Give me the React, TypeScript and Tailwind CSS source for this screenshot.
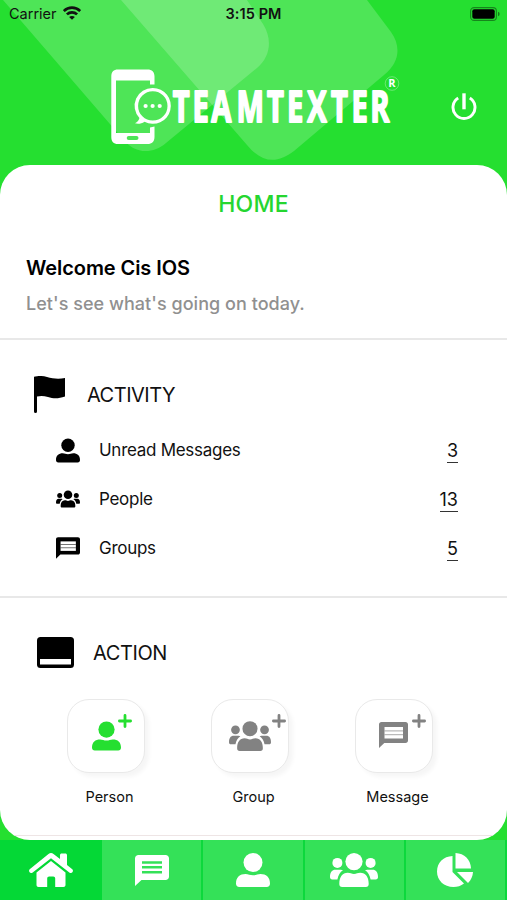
import React from 'react';

type IconProps = { className?: string };

const WifiIcon: React.FC<IconProps> = ({ className }) => (
    <svg viewBox="0 0 18 14" className={className} fill="none" stroke="currentColor" strokeWidth="2.7">
        <path d="M.8 5C5.4.6 12.6.6 17.2 5" />
        <path d="M3.900 8.400C6.800 5.600 11.200 5.600 14.100 8.400" />
        <path d="M9 13.800 6.100 11C7.700 9.500 10.300 9.500 11.900 11Z" fill="currentColor" stroke="none" />
    </svg>
);

const BatteryIcon: React.FC<IconProps> = ({ className }) => (
    <svg viewBox="0 0 30 14" className={className}>
        <rect x=".6" y=".6" width="25.800" height="12.800" rx="3.500" fill="none" stroke="#000" strokeOpacity=".4" strokeWidth="1.100" />
        <rect x="2.300" y="2.300" width="22.400" height="9.400" rx="2" fill="#000" />
        <path d="M28 4.800a2.300 2.300 0 0 1 0 4.400Z" fill="#000" fillOpacity=".45" />
    </svg>
);

const PowerIcon: React.FC<IconProps> = ({ className }) => (
    <svg viewBox="0 0 26 28" className={className} fill="none" stroke="currentColor" strokeWidth="2.900">
        <path d="M13 .3V16.300" strokeWidth="3.400" />
        <path d="M7.200 5.100A11 11 0 1 0 18.800 5.100" />
    </svg>
);

const PersonIcon: React.FC<IconProps> = ({ className }) => (
    <svg viewBox="0 0 34 34" className={className} fill="currentColor">
        <ellipse cx="17" cy="9.500" rx="9.500" ry="9.500" />
        <path d="M0 30.500C0 24 4 21 9.500 21c2.800 0 4.500 1.300 7.500 1.300S21.700 21 24.500 21C30 21 34 24 34 30.500c0 2.300-1.200 3.500-3.300 3.500H3.300C1.200 34 0 32.800 0 30.500Z" />
    </svg>
);

const GroupIcon: React.FC<IconProps> = ({ className }) => (
    <svg viewBox="0 0 48 34" className={className} fill="currentColor">
        <circle cx="24" cy="8.600" r="8.600" />
        <path d="M9.300 31c0-7 3-11.300 8.500-11.300 2.600 0 3.700 1.200 6.200 1.200s3.600-1.200 6.200-1.200c5.500 0 8.500 4.300 8.500 11.300 0 2-1 3-2.900 3H12.200c-1.900 0-2.900-1-2.900-3Z" />
        <circle cx="7.400" cy="9.900" r="5" />
        <circle cx="40.600" cy="9.900" r="5" />
        <path d="M0 24c0-5 2.300-7.300 5.200-7.300h5.600c.8 0 1.600.2 2.200.6-3 1.800-4.800 5-5.600 9.200H2.300C.8 26.500 0 25.600 0 24Z" />
        <path d="M48 24c0-5-2.300-7.300-5.200-7.300h-5.600c-.8 0-1.600.2-2.200.6 3 1.800 4.800 5 5.600 9.200h5.100c1.500 0 2.300-.9 2.300-2.500Z" />
    </svg>
);

// solid bubble, the lines are cut out of it
const BubbleIcon: React.FC<IconProps> = ({ className }) => (
    <svg viewBox="0 0 34 31" className={className}>
        <path
            fill="currentColor"
            fillRule="evenodd"
            d="M3.500 0h27C32.500 0 34 1.500 34 3.500v18c0 2-1.500 3.500-3.500 3.500H6.500L0 31V3.500C0 1.500 1.500 0 3.500 0ZM7 6.300v2.500h20V6.300ZM7 11v2.500h20V11ZM7 15.900v2.500h20v-2.500Z"
        />
    </svg>
);

// outlined bubble with a pale lined panel inside
const PanelBubbleIcon: React.FC<IconProps> = ({ className }) => (
    <svg viewBox="0 0 29 26" className={className}>
        <path d="M2.500 0h24C28 0 29 1 29 2.500v16c0 1.500-1 2.500-2.500 2.500H5.300L0 26V2.500C0 1 1 0 2.500 0Z" fill="currentColor" />
        <path d="M5.500 5h18.500v11.500H5.500Z" fill="#fff" />
        <path d="M5.500 8.800h18.500M5.500 12.700h18.500" stroke="currentColor" strokeOpacity=".55" strokeWidth="1.300" />
    </svg>
);

const FlagIcon: React.FC<IconProps> = ({ className }) => (
    <svg viewBox="0 0 31 37" className={className} fill="currentColor">
        <path d="M0 1.500C0 .5.700.3 1.500.4 5-.3 9-.2 13 1c6 1.800 12 2.200 18 1v18.500c-7 2.500-12 2-17 .5-4-1.200-7.500-1.300-11-.5V35.500a1.500 1.500 0 0 1-3 0Z" />
    </svg>
);

const HomeIcon: React.FC<IconProps> = ({ className }) => (
    <svg viewBox="0 0 44 34" className={className} fill="currentColor">
        <path d="M7.500 19.500 22 8l14.500 11.500V32c0 1.200-.8 2-2 2h-8.300v-8.500c0-1.200-.8-2-2-2h-4c-1.200 0-2 .8-2 2V34H9.500c-1.200 0-2-.8-2-2Z" />
        <path d="M19.500 1c1.500-1.300 3.500-1.300 5 0l6.500 5V2.200C31 1.200 31.700.6 32.700.6h3.600c1 0 1.700.6 1.700 1.600V12l5.300 4.300c1.500 1.300.2 3.700-1.300 3.700-.8 0-1.200-.2-1.700-.6L22 5.300 3.700 19.400c-.5.400-1 .6-1.700.6-1.500 0-2.800-2.400-1.300-3.700Z" />
    </svg>
);

const PieIcon: React.FC<IconProps> = ({ className }) => (
    <svg viewBox="0 0 37 34" className={className} fill="currentColor">
        <path d="M15.500 3v16L27 30.500C23.800 33 20.500 34 16.500 34 7 34 0 27.500 0 18.500S6.500 3.300 15.500 3Z" />
        <path d="M18.500 0C27.500.500 33.500 6.500 34 15.500H18.500Z" />
        <path d="M20 19h16c-.3 4.500-2 8-5 11Z" />
    </svg>
);

const Logo: React.FC<IconProps> = ({ className }) => (
    <svg viewBox="111 69 290 77" className={className}>
        <g fill="#fff">
            <path
                fillRule="evenodd"
                d="M118 69.500h29.500c4.500 0 7 2.500 7 7V84.500H150V80.500H116v52.500h34v-5.500l4.500-1v10.500c0 4.500-2.500 7-7 7H118c-4.500 0-6.700-2.500-6.700-7V76.500c0-4.500 2.200-7 6.700-7Zm10.700 66.500a1.700 1.700 0 0 0 0 4h7.800a1.700 1.700 0 0 0 0-4Z"
            />
            <path
                fillRule="evenodd"
                d="M152.800 88a17.900 17.900 0 1 1-8.300 33.700c-3 2-6.500 2.500-9.500 1.600 2.500-1.300 4-3 4.400-5.200A17.900 17.900 0 0 1 152.800 88Zm0 3.200a14.700 14.700 0 1 0 0 29.400 14.700 14.700 0 0 0 0-29.400Z"
            />
            <circle cx="145.600" cy="106" r="2.100" />
            <circle cx="152.600" cy="106" r="2.100" />
            <circle cx="159.700" cy="106" r="2.100" />
        </g>
        {/* condensed lettering, each letter centred on its own x */}
        <text
            x="270.6 299.5 330.2 373.4 411.2 440.5 473.1 506.7 537 567"
            y="122.5"
            transform="scale(.67 1)"
            textAnchor="middle"
            fill="#fff"
            stroke="#fff"
            strokeWidth="2"
            strokeLinejoin="round"
            className="font-['Open_Sans',sans-serif] text-[43.500px] font-bold"
        >
            TEAMTEXTER
        </text>
        <circle cx="392" cy="83.500" r="6.800" fill="none" stroke="#fff" strokeOpacity=".45" strokeWidth=".7" />
        <text x="392" y="87.300" fill="#fff" textAnchor="middle" className="font-['Open_Sans',sans-serif] text-[11px] font-bold">
            R
        </text>
    </svg>
);

const activity = [
    { label: 'Unread Messages', count: 3, icon: <PersonIcon className="h-[25px] w-[24px]" /> },
    { label: 'People', count: 13, icon: <GroupIcon className="-mt-[2px] h-[18px] w-[24px]" /> },
    { label: 'Groups', count: 5, icon: <PanelBubbleIcon className="-mt-[2px] h-[22px] w-[24px]" /> },
];

const actions = [
    { label: 'Person', color: 'text-[#25df30]', plus: 'right-[12px]', icon: <PersonIcon className="h-[30px] w-[29px]" /> },
    { label: 'Group', color: 'text-[#828282]', plus: 'right-[2px]', icon: <GroupIcon className="-mt-[1px] h-[30px] w-[42px]" /> },
    { label: 'Message', color: 'text-[#828282]', plus: 'right-[6px]', icon: <PanelBubbleIcon className="-mt-[2px] mr-[2px] h-[26px] w-[29px]" /> },
];

const tabs = [
    { name: 'home', icon: <HomeIcon className="h-[34px] w-[44px]" /> },
    { name: 'messages', icon: <BubbleIcon className="h-[31px] w-[34px]" /> },
    { name: 'person', icon: <PersonIcon className="h-[34px] w-[34px]" /> },
    { name: 'groups', icon: <GroupIcon className="h-[34px] w-[48px]" /> },
    { name: 'reports', icon: <PieIcon className="h-[34px] w-[37px]" /> },
];

const Header: React.FC = () => (
    <header className="relative h-[165px]">
        <svg viewBox="0 0 507 165" className="absolute inset-0 h-[165px] w-[507px]" fill="#fff" fillOpacity=".19">
            <path d="M3 0 122 138C134 154 152 155 166 143L257 68C270 57 273 40 263 24L247 0Z" />
            <path d="M121 0 247 145C262 163 277 164 294 151L384 75C400 62 401 46 391 32L367 0Z" />
        </svg>
        <div className="relative grid h-7 grid-cols-3 items-center pr-[7px] pl-[9px]">
            <div className="flex items-center gap-[6px]">
                <span className="text-[14.5px]">Carrier</span>
                <WifiIcon className="-mt-[2px] h-[14px] w-[18px]" />
            </div>
            <span className="pr-[2px] text-center text-[14.5px] font-semibold tracking-[0.1px]">3:15 PM</span>
            <BatteryIcon className="-mt-[1px] h-[14px] w-[30px] justify-self-end" />
        </div>
        <div className="relative mt-[41px] flex items-start justify-between pr-[30px] pl-[111px]">
            <Logo className="h-[77px] w-[290px] overflow-visible" />
            <PowerIcon className="mt-[24px] h-[28px] w-[26px] text-white" />
        </div>
    </header>
);

const App: React.FC = () => {
    return (
        <div className="flex h-[900px] w-[507px] flex-col overflow-hidden bg-[#25df30] font-[Inter,sans-serif] text-[#111]">
            <Header />

            <main className="flex h-[675px] flex-col overflow-hidden rounded-[30px] bg-white">
                {/* Welcome */}
                <section className="h-[175px] border-b-2 border-[#e8e8e8] px-[26px] pt-[22px]">
                    <h1 className="text-center text-[23px] leading-[34px] font-medium tracking-[0.2px] text-[#25d630]">HOME</h1>
                    <h2 className="mt-[34px] text-[20px] leading-[26px] font-semibold tracking-[-0.08px] text-black">Welcome Cis IOS</h2>
                    <p className="mt-[11px] text-[18px] leading-[24px] font-medium tracking-[0.04px] text-[#909090]">Let's see what's going on today.</p>
                </section>

                {/* Activity */}
                <section className="h-[258px] border-b-2 border-[#e8e8e8] pt-[35px]">
                    <div className="flex h-[40px] items-center pl-[34px]">
                        <FlagIcon className="-mt-[2px] h-[37px] w-[31px] text-black" />
                        <h3 className="ml-[22px] text-[20px] tracking-[-0.5px]">ACTIVITY</h3>
                    </div>
                    <ul className="mt-[11px] pr-[49px] pl-[56px]">
                        {activity.map((row) => (
                            <li key={row.label} className="flex h-[49px] items-center">
                                <span className="text-black">{row.icon}</span>
                                <span className="ml-[19px] text-[17px] tracking-[-0.28px]">{row.label}</span>
                                <span className="ml-auto border-b-[1.5px] border-[#333] text-[18px] leading-[23px]">{row.count}</span>
                            </li>
                        ))}
                    </ul>
                </section>

                {/* Action */}
                <section className="h-[238px] border-b border-[#eee5e5] pt-[35px]">
                    <div className="flex h-[40px] items-center pl-[37px]">
                        <svg viewBox="0 0 37 31" className="-mt-[2px] h-[31px] w-[37px]">
                            <rect width="37" height="31" rx="3.500" fill="#000" />
                            <rect x="3" y="22" width="31" height="5.500" fill="#fff" />
                        </svg>
                        <h3 className="ml-[19px] text-[20px] tracking-[-0.4px]">ACTION</h3>
                    </div>
                    <div className="mt-[26px] flex gap-[66px] pl-[67px]">
                        {actions.map((action) => (
                            <div key={action.label} className="flex w-[78px] flex-col items-center">
                                <div className={`relative flex h-[74px] w-[78px] items-center justify-center rounded-[22px] border border-[#e9e9e9] bg-white shadow-[4px_4px_4px_#f6f6f6] ${action.color}`}>
                                    {action.icon}
                                    <svg viewBox="0 0 14 14" className={`absolute top-[14px] h-[14px] w-[14px] ${action.plus}`} stroke="currentColor" strokeWidth="2.800" strokeLinecap="round">
                                        <path d="M7 1.400v11.200M1.400 7h11.200" />
                                    </svg>
                                </div>
                                <span className="mt-[14px] pl-[7px] text-[14.5px] leading-[20px]">{action.label}</span>
                            </div>
                        ))}
                    </div>
                </section>
            </main>

            <nav className="flex h-[60px] bg-[#34e158] text-white">
                {tabs.map((tab, i) => (
                    <div
                        key={tab.name}
                        className={`flex items-center justify-center ${i === 0 ? 'w-[102px] bg-[#04d836]' : 'flex-1 border-r-2 border-[#0cd83c]'}`}
                    >
                        {tab.icon}
                    </div>
                ))}
            </nav>
        </div>
    );
};

export default App;
